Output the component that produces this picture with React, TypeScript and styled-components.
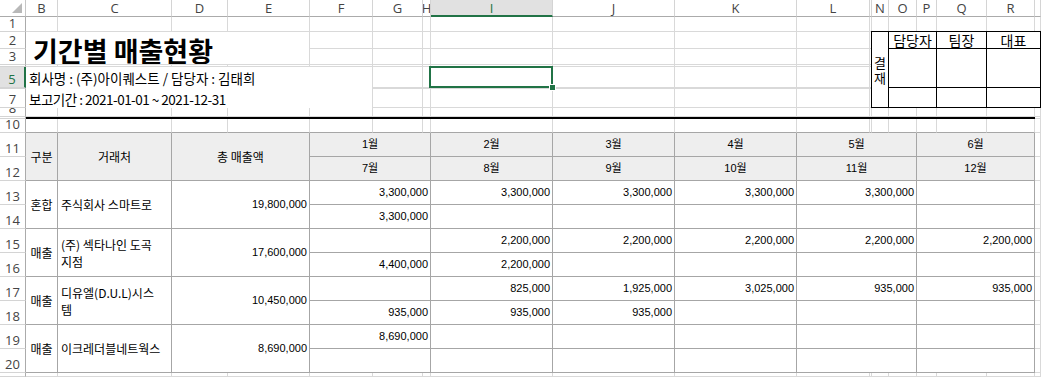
import styled, { createGlobalStyle } from "styled-components"

const GlobalStyle = createGlobalStyle`
  html, body { margin: 0; padding: 0; background: #fff; }
  body { overflow: hidden; font-family: "Noto Sans CJK KR", "Noto Sans", sans-serif; }
`

// widths of the row header + columns B..S
const COL_W = [26, 32, 114, 56, 82, 63, 50, 8, 122, 122, 122, 73, 2, 17, 28, 20, 50, 48, 6]
const COL_NAMES = ["", "B", "C", "D", "E", "F", "G", "H", "I", "J", "K", "L", "", "N", "O", "P", "Q", "R", ""]
// column header, then sheet rows 1..21
const ROW_H = [17, 15, 17, 16, 2, 21, 1, 19, 9, 2, 14, 24, 24, 24, 24, 24, 24, 24, 24, 24, 24, 4]
const HIDDEN_ROWS = [4, 6, 9, 21]

const GRID = "#d9d9d9"
const EDGE = "#a6a6a6"
const GREEN = "#217346"

const col = (letter: string) => COL_NAMES.indexOf(letter) + 1

const Sheet = styled.div`
  display: grid;
  grid-template-columns: ${COL_W.map((w) => w + "px").join(" ")};
  grid-template-rows: ${ROW_H.map((h) => h + "px").join(" ")};
  width: 1041px;
  height: 377px;
  overflow: hidden;
  background: #fff;
`

interface Place {
  $c: number
  $r: number
  $cs?: number
  $rs?: number
}

const Cell = styled.div<Place>`
  grid-column: ${(p) => p.$c} / span ${(p) => p.$cs ?? 1};
  grid-row: ${(p) => p.$r + 1} / span ${(p) => p.$rs ?? 1};
  box-sizing: border-box;
  min-width: 0;
  min-height: 0;
  overflow: hidden;
`

const Corner = styled(Cell)`
  display: flex;
  align-items: flex-end;
  justify-content: flex-end;
  padding: 0 3px 3px 0;
  border-right: 1px solid #c6c6c6;
  border-bottom: 1px solid #ababab;
`

const ColHead = styled(Cell)<{ $active?: boolean }>`
  display: flex;
  align-items: center;
  justify-content: center;
  font: 13px "Open Sans", "Noto Sans", sans-serif;
  color: ${(p) => (p.$active ? GREEN : "#444")};
  background: ${(p) => (p.$active ? "#e1e1e1" : "#fff")};
  border-right: 1px solid #d4d4d4;
  border-bottom: ${(p) => (p.$active ? `2px solid ${GREEN}` : "1px solid #ababab")};
  white-space: nowrap;
`

const RowHead = styled(Cell)<{ $active?: boolean; $hidden?: boolean }>`
  display: flex;
  align-items: flex-end;
  justify-content: center;
  padding-bottom: ${(p) => (p.$hidden ? 0 : "2px")};
  font: 13px "Open Sans", "Noto Sans", sans-serif;
  line-height: 12px;
  color: ${(p) => (p.$active ? GREEN : "#444")};
  background: ${(p) => (p.$active ? "#e1e1e1" : "#fff")};
  border-right: ${(p) => (p.$active ? `2px solid ${GREEN}` : "1px solid #ababab")};
  border-bottom: 1px solid #d4d4d4;
`

const GridCell = styled(Cell)<{ $edge?: string }>`
  border-right: 1px solid ${GRID};
  border-bottom: 1px solid ${(p) => p.$edge ?? GRID};
`

const SelectedCell = styled(GridCell)`
  position: relative;
  overflow: visible;
`

const Selection = styled.div`
  position: absolute;
  top: -1px;
  left: -2px;
  right: -1px;
  bottom: -1px;
  border: 2px solid ${GREEN};
`

const Handle = styled.div`
  position: absolute;
  right: -5px;
  bottom: -5px;
  width: 5px;
  height: 5px;
  background: ${GREEN};
  border: 1px solid #fff;
`

const TitleCell = styled(Cell)`
  display: flex;
  align-items: flex-end;
  padding-left: 7px;
  font-size: 27px;
  font-weight: 700;
  line-height: 1;
  color: #000;
  white-space: nowrap;
  border-right: 1px solid ${GRID};
  border-bottom: 1px solid ${GRID};
`

const InfoCell = styled(Cell)<{ $spacing?: number }>`
  display: flex;
  align-items: center;
  padding-left: 3px;
  font-size: 13.5px;
  letter-spacing: ${(p) => p.$spacing ?? 0}px;
  color: #000;
  white-space: nowrap;
  border-right: 1px solid ${GRID};
`

const Rule = styled(Cell)`
  background: #000;
`

const Approval = styled(Cell)`
  margin: -1px 0 0 -1px;
  display: grid;
  grid-template-columns: 17px 48px 50px 54px;
  grid-template-rows: 17px 39px 20px;
  border-top: 1px solid #000;
  border-left: 1px solid #000;
  background: #fff;
  overflow: visible;
`

const ApprovalCell = styled.div<{ $c: number; $r: number; $rs?: number; $small?: boolean }>`
  grid-column: ${(p) => p.$c};
  grid-row: ${(p) => p.$r} / span ${(p) => p.$rs ?? 1};
  box-sizing: border-box;
  display: flex;
  align-items: center;
  justify-content: center;
  text-align: center;
  font-size: ${(p) => (p.$small ? "13px" : "14px")};
  line-height: 15px;
  color: #000;
  border-right: 1px solid #000;
  border-bottom: 1px solid #000;
`

type Align = "left" | "center" | "right"

const TableCell = styled(Cell)<{ $head?: boolean; $align?: Align; $num?: boolean }>`
  display: flex;
  align-items: center;
  justify-content: ${(p) =>
    p.$align === "right" ? "flex-end" : p.$align === "left" ? "flex-start" : "center"};
  padding: 0 ${(p) => (p.$align === "right" ? "2px" : "3px")};
  background: ${(p) => (p.$head ? "#eeeeee" : "#fff")};
  border-right: 1px solid ${EDGE};
  border-bottom: 1px solid ${EDGE};
  font-family: ${(p) =>
    p.$num ? `"Liberation Sans", "Noto Sans CJK KR", sans-serif` : `"Noto Sans CJK KR", sans-serif`};
  font-size: ${(p) => (p.$num ? "11px" : "12px")};
  line-height: 17px;
  color: #000;
  white-space: nowrap;
`

const MONTHS: [number, number][] = [
  [col("F"), 3],
  [col("I"), 1],
  [col("J"), 1],
  [col("K"), 1],
  [col("L"), 4],
  [col("P"), 3],
]
const HEAD_TOP = ["1월", "2월", "3월", "4월", "5월", "6월"]
const HEAD_BOTTOM = ["7월", "8월", "9월", "10월", "11월", "12월"]

interface Sale {
  kind: string
  name: string[]
  total: string
  top: string[]
  bottom: string[]
}

const SALES: Sale[] = [
  {
    kind: "혼합",
    name: ["주식회사 스마트로"],
    total: "19,800,000",
    top: ["3,300,000", "3,300,000", "3,300,000", "3,300,000", "3,300,000", ""],
    bottom: ["3,300,000", "", "", "", "", ""],
  },
  {
    kind: "매출",
    name: ["(주) 섹타나인 도곡", "지점"],
    total: "17,600,000",
    top: ["", "2,200,000", "2,200,000", "2,200,000", "2,200,000", "2,200,000"],
    bottom: ["4,400,000", "2,200,000", "", "", "", ""],
  },
  {
    kind: "매출",
    name: ["디유엘(D.U.L)시스", "템"],
    total: "10,450,000",
    top: ["", "825,000", "1,925,000", "3,025,000", "935,000", "935,000"],
    bottom: ["935,000", "935,000", "935,000", "", "", ""],
  },
  {
    kind: "매출",
    name: ["이크레더블네트웍스"],
    total: "8,690,000",
    top: ["8,690,000", "", "", "", "", ""],
    bottom: ["", "", "", "", "", ""],
  },
]

// cells in rows 1..10 that are drawn by something other than a plain gridline cell
const covered = (c: number, r: number) =>
  (r >= 2 && r <= 3 && c >= col("B") && c <= col("E")) ||
  (r >= 5 && r <= 7 && c >= col("B") && c <= col("F")) ||
  (r >= 2 && r <= 7 && c >= col("N")) ||
  (r === 9 && c <= col("R")) ||
  (r === 5 && c === col("I"))

function Headers() {
  const out = [
    <Corner key="corner" $c={1} $r={0}>
      <svg width="10" height="10" viewBox="0 0 10 10">
        <polygon points="10,0 10,10 0,10" fill="#b8b8b8" />
      </svg>
    </Corner>,
  ]
  COL_NAMES.forEach((name, i) => {
    if (i === 0) return
    out.push(
      <ColHead key={"c" + i} $c={i + 1} $r={0} $active={name === "I"}>
        {name}
      </ColHead>
    )
  })
  for (let r = 1; r <= 21; r++) {
    const hidden = HIDDEN_ROWS.includes(r)
    out.push(
      <RowHead key={"r" + r} $c={1} $r={r} $hidden={hidden} $active={r === 5}>
        {hidden ? "" : r}
      </RowHead>
    )
  }
  return <>{out}</>
}

function Blank() {
  const out = []
  for (let r = 1; r <= 10; r++) {
    for (let c = 2; c <= COL_W.length; c++) {
      if (covered(c, r)) continue
      const edge = r === 10 && c <= col("R") ? EDGE : undefined
      out.push(<GridCell key={`g${r}-${c}`} $c={c} $r={r} $edge={edge} />)
    }
  }
  for (let r = 11; r <= 20; r++) out.push(<GridCell key={`s${r}`} $c={COL_W.length} $r={r} />)
  for (let c = 2; c <= COL_W.length; c++) out.push(<GridCell key={`b${c}`} $c={c} $r={21} />)
  return <>{out}</>
}

function Top() {
  return (
    <>
      <TitleCell $c={col("B")} $cs={4} $r={2} $rs={2}>
        기간별 매출현황
      </TitleCell>
      <InfoCell $c={col("B")} $cs={5} $r={5}>
        회사명 : (주)아이퀘스트 / 담당자 : 김태희
      </InfoCell>
      <InfoCell $c={col("B")} $cs={5} $r={6} />
      <InfoCell $spacing={-0.5} $c={col("B")} $cs={5} $r={7}>
        보고기간 : 2021-01-01 ~ 2021-12-31
      </InfoCell>
      <SelectedCell $c={col("I")} $r={5}>
        <Selection>
          <Handle />
        </Selection>
      </SelectedCell>
      <Rule $c={col("B")} $cs={17} $r={9} />
      <Approval $c={col("N")} $cs={6} $r={2} $rs={6}>
        <ApprovalCell $c={1} $r={1} $rs={3} $small>
          결<br />재
        </ApprovalCell>
        <ApprovalCell $c={2} $r={1}>담당자</ApprovalCell>
        <ApprovalCell $c={3} $r={1}>팀장</ApprovalCell>
        <ApprovalCell $c={4} $r={1}>대표</ApprovalCell>
        <ApprovalCell $c={2} $r={2} />
        <ApprovalCell $c={3} $r={2} />
        <ApprovalCell $c={4} $r={2} />
        <ApprovalCell $c={2} $r={3} />
        <ApprovalCell $c={3} $r={3} />
        <ApprovalCell $c={4} $r={3} />
      </Approval>
    </>
  )
}

function Table() {
  return (
    <>
      <TableCell $head $c={col("B")} $r={11} $rs={2}>구분</TableCell>
      <TableCell $head $c={col("C")} $r={11} $rs={2}>거래처</TableCell>
      <TableCell $head $c={col("D")} $cs={2} $r={11} $rs={2}>총 매출액</TableCell>
      {MONTHS.map(([c, span], i) => (
        <TableCell key={"ht" + i} $head $num $c={c} $cs={span} $r={11}>
          {HEAD_TOP[i]}
        </TableCell>
      ))}
      {MONTHS.map(([c, span], i) => (
        <TableCell key={"hb" + i} $head $num $c={c} $cs={span} $r={12}>
          {HEAD_BOTTOM[i]}
        </TableCell>
      ))}
      {SALES.map((s, k) => {
        const r = 13 + k * 2
        return [
          <TableCell key={"k" + k} $c={col("B")} $r={r} $rs={2}>{s.kind}</TableCell>,
          <TableCell key={"n" + k} $align="left" $c={col("C")} $r={r} $rs={2}>
            <div>
              {s.name.map((line, j) => (
                <div key={j}>{line}</div>
              ))}
            </div>
          </TableCell>,
          <TableCell key={"t" + k} $num $align="right" $c={col("D")} $cs={2} $r={r} $rs={2}>
            {s.total}
          </TableCell>,
          ...MONTHS.map(([c, span], i) => (
            <TableCell key={`u${k}-${i}`} $num $align="right" $c={c} $cs={span} $r={r}>
              {s.top[i]}
            </TableCell>
          )),
          ...MONTHS.map(([c, span], i) => (
            <TableCell key={`d${k}-${i}`} $num $align="right" $c={c} $cs={span} $r={r + 1}>
              {s.bottom[i]}
            </TableCell>
          )),
        ]
      })}
    </>
  )
}

export default function App() {
  return (
    <>
      <GlobalStyle />
      <Sheet>
        <Headers />
        <Blank />
        <Top />
        <Table />
      </Sheet>
    </>
  )
}
